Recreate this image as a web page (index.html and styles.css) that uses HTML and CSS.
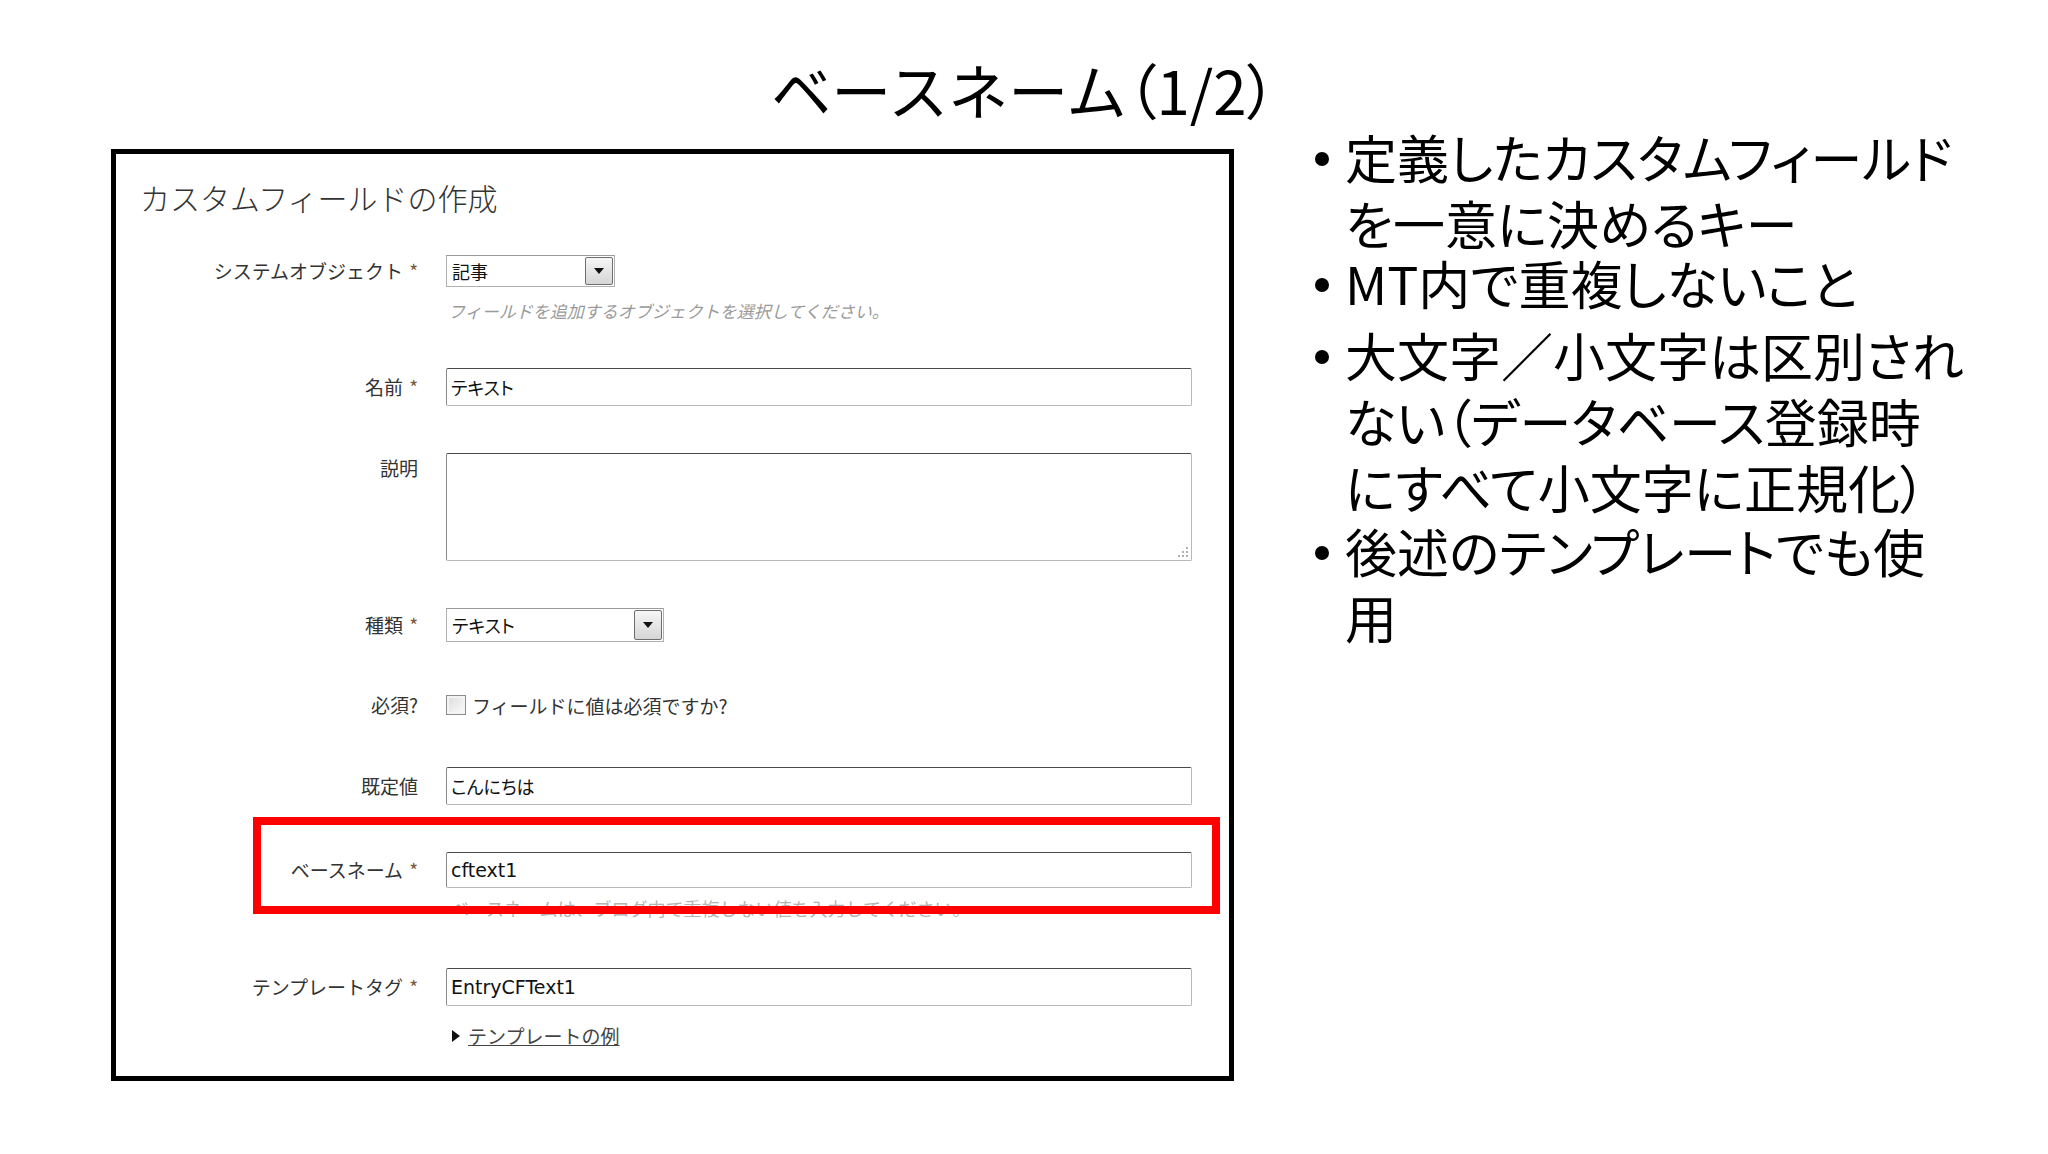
FILE: index.html
```html
<!DOCTYPE html>
<html lang="ja">
<head>
<meta charset="utf-8">
<title>ベースネーム(1/2)</title>
<link rel="stylesheet" href="styles.css">
</head>
<body>
<h1 class="title">ベースネーム<span class="paren">（1/2）</span></h1>
<div class="content">
  <section class="panel">
    <h2 class="panel-title">カスタムフィールドの作成</h2>

    <div class="row row-obj">
      <div class="lbl h32">システムオブジェクト<span class="req">*</span></div>
      <div class="field">
        <div class="select sel-obj"><span class="sel-text">記事</span><span class="sel-btn"><i class="tri"></i></span></div>
        <div class="hint">フィールドを追加するオブジェクトを選択してください。</div>
      </div>
    </div>

    <div class="row row-gap">
      <div class="lbl h38">名前<span class="req">*</span></div>
      <div class="field"><div class="input h38">テキスト</div></div>
    </div>

    <div class="row row-gap">
      <div class="lbl h30">説明</div>
      <div class="field">
        <div class="textarea">
          <svg class="grip" width="12" height="12" viewBox="0 0 12 12"><g fill="#b0b0b0"><rect x="9" y="1" width="2" height="2"/><rect x="5" y="5" width="2" height="2"/><rect x="9" y="5" width="2" height="2"/><rect x="1" y="9" width="2" height="2"/><rect x="5" y="9" width="2" height="2"/><rect x="9" y="9" width="2" height="2"/></g></svg>
        </div>
      </div>
    </div>

    <div class="row row-gap">
      <div class="lbl h34">種類<span class="req">*</span></div>
      <div class="field">
        <div class="select sel-type"><span class="sel-text">テキスト</span><span class="sel-btn"><i class="tri"></i></span></div>
      </div>
    </div>

    <div class="row row-check">
      <div class="lbl h30">必須?</div>
      <div class="field check-line">
        <span class="checkbox"></span><span class="check-text">フィールドに値は必須ですか?</span>
      </div>
    </div>

    <div class="row row-gap">
      <div class="lbl h38">既定値</div>
      <div class="field"><div class="input h38">こんにちは</div></div>
    </div>

    <div class="row row-gap">
      <div class="lbl h36">ベースネーム<span class="req">*</span></div>
      <div class="field">
        <div class="input h36 latin">cftext1</div>
        <div class="hint2">ベースネームは、ブログ内で重複しない値を入力してください。</div>
      </div>
    </div>

    <div class="row row-tag">
      <div class="lbl h38">テンプレートタグ<span class="req">*</span></div>
      <div class="field">
        <div class="input h38 latin">EntryCFText1</div>
        <div class="link-line"><i class="rtri"></i><span class="link">テンプレートの例</span></div>
      </div>
    </div>

    <div class="redbox"></div>
  </section>

  <ul class="bullets">
    <li class="b1"><span class="dot"></span><span class="btext">定義したカスタムフィールド<br>を一意に決めるキー</span></li>
    <li class="b2"><span class="dot"></span><span class="btext">MT内で重複しないこと</span></li>
    <li class="b3"><span class="dot"></span><span class="btext">大文字<span class="wide">／</span>小文字は区別され<br>ない（データベース登録時<br>にすべて小文字に正規化）</span></li>
    <li class="b4"><span class="dot"></span><span class="btext">後述のテンプレートでも使<br>用</span></li>
  </ul>
</div>
</body>
</html>
```

FILE: styles.css
```css
html, body {
  margin: 0;
  padding: 0;
  background: #ffffff;
}
body {
  width: 2048px;
  height: 1154px;
  overflow: hidden;
  font-family: "Noto Sans CJK JP", "Noto Sans", sans-serif;
  color: #000;
}

.title {
  margin: 57px 0 0 0;
  padding-right: 0;
  height: 64px;
  line-height: 64px;
  font-size: 60px;
  font-weight: 400;
  text-align: center;
  white-space: nowrap;
}
.paren {
  font-feature-settings: "palt" 1;
}

.content {
  display: flex;
  align-items: flex-start;
}

.panel {
  position: relative;
  box-sizing: border-box;
  width: 1123px;
  height: 932px;
  margin: 28px 0 0 111px;
  border: 5px solid #000;
  background: #fff;
  color: #333;
}

.panel-title {
  margin: 25px 0 0 24px;
  height: 36px;
  line-height: 36px;
  font-size: 30px;
  font-weight: 300;
  color: #333;
  white-space: nowrap;
}

.row {
  display: grid;
  grid-template-columns: 302px 746px;
  column-gap: 28px;
  align-items: start;
}
.row-obj { margin-top: 40px; }
.row-gap { margin-top: 47px; }
.row-check { margin-top: 48px; }
.row-tag { margin-top: 49px; }

.lbl {
  text-align: right;
  font-size: 19px;
  color: #333;
  white-space: nowrap;
}
.h30 { line-height: 30px; height: 30px; }
.h32 { line-height: 32px; height: 32px; }
.h34 { line-height: 34px; height: 34px; }
.h36 { line-height: 36px; height: 36px; }
.h38 { line-height: 38px; height: 38px; }

.req {
  margin-left: 6px;
  color: #7a5a3e;
}

.field {
  font-size: 18px;
}

.input {
  box-sizing: border-box;
  width: 746px;
  padding: 0 4px;
  border: 1px solid #b8b8b8;
  border-top-color: #4a4a4a;
  border-left-color: #8a8a8a;
  border-radius: 2px;
  background: #fff;
  color: #111;
  font-size: 18px;
  font-feature-settings: "palt" 1;
  white-space: nowrap;
}
.input.latin {
  font-family: "DejaVu Sans", "Noto Sans CJK JP", sans-serif;
  font-size: 19px;
}
.input.h38 { line-height: 36px; }
.input.h36 { line-height: 34px; }

.textarea {
  box-sizing: border-box;
  width: 746px;
  height: 108px;
  border: 1px solid #b8b8b8;
  border-top-color: #4a4a4a;
  border-left-color: #8a8a8a;
  border-radius: 2px;
  background: #fff;
  display: flex;
  justify-content: flex-end;
  align-items: flex-end;
  padding: 0 2px 2px 0;
}
.grip { display: block; }

.select {
  box-sizing: border-box;
  display: flex;
  align-items: stretch;
  border: 1px solid #b0b0b0;
  border-top-color: #9a9a9a;
  background: #fff;
  color: #111;
}
.sel-obj { width: 169px; height: 32px; }
.sel-type { width: 218px; height: 34px; }
.sel-text {
  flex: 1;
  padding-left: 5px;
  font-size: 18px;
  line-height: 30px;
  font-feature-settings: "palt" 1;
  white-space: nowrap;
}
.sel-type .sel-text { line-height: 32px; }
.sel-btn {
  box-sizing: border-box;
  width: 28px;
  margin: 1px;
  border: 1px solid #6e6e6e;
  border-radius: 2px;
  background: linear-gradient(#f6f6f6, #d6d6d6);
  display: flex;
  align-items: center;
  justify-content: center;
}
.tri {
  display: block;
  width: 0;
  height: 0;
  border-left: 5px solid transparent;
  border-right: 5px solid transparent;
  border-top: 6px solid #111;
}

.hint {
  margin-top: 14px;
  height: 20px;
  line-height: 20px;
  font-size: 17px;
  font-style: italic;
  color: #9a9a9a;
  padding-left: 2px;
  white-space: nowrap;
}
.hint2 {
  margin-top: 9px;
  height: 22px;
  line-height: 22px;
  font-size: 18px;
  color: #b4b4b4;
  padding-left: 5px;
  white-space: nowrap;
}

.check-line {
  display: flex;
  align-items: center;
  height: 30px;
}
.checkbox {
  box-sizing: border-box;
  width: 20px;
  height: 20px;
  border: 1px solid #8c8c8c;
  background: linear-gradient(135deg, #dcdcdc, #fbfbfb);
  box-shadow: inset 0 0 0 2px #f4f4f4;
  margin-right: 6px;
}
.check-text {
  font-size: 19px;
  color: #333;
  white-space: nowrap;
}

.link-line {
  margin-top: 18px;
  height: 24px;
  line-height: 24px;
  display: flex;
  align-items: center;
  padding-left: 6px;
}
.rtri {
  display: block;
  width: 0;
  height: 0;
  border-top: 6px solid transparent;
  border-bottom: 6px solid transparent;
  border-left: 8px solid #111;
  margin-right: 8px;
}
.link {
  font-size: 19px;
  color: #444;
  text-decoration: underline;
  white-space: nowrap;
}

.redbox {
  position: absolute;
  left: 137px;
  top: 663px;
  width: 967px;
  height: 97px;
  box-sizing: border-box;
  border: 8px solid #ff0000;
  pointer-events: none;
}

.bullets {
  list-style: none;
  margin: 3px 0 0 81px;
  padding: 0;
  font-size: 52px;
  line-height: 66px;
  font-feature-settings: "palt" 1;
  color: #000;
}
.bullets li {
  display: flex;
  align-items: flex-start;
}
.b2 { margin-top: -6px; }
.b3 { margin-top: 6px; }
.b4 { margin-top: -2px; }
.wide {
  font-feature-settings: "palt" 0;
}
.dot {
  flex: none;
  width: 30px;
  height: 66px;
  display: flex;
  align-items: center;
}
.dot::before {
  content: "";
  display: block;
  width: 14px;
  height: 14px;
  border-radius: 50%;
  background: #000;
  margin-top: 4px;
}
.btext {
  white-space: nowrap;
}
```
